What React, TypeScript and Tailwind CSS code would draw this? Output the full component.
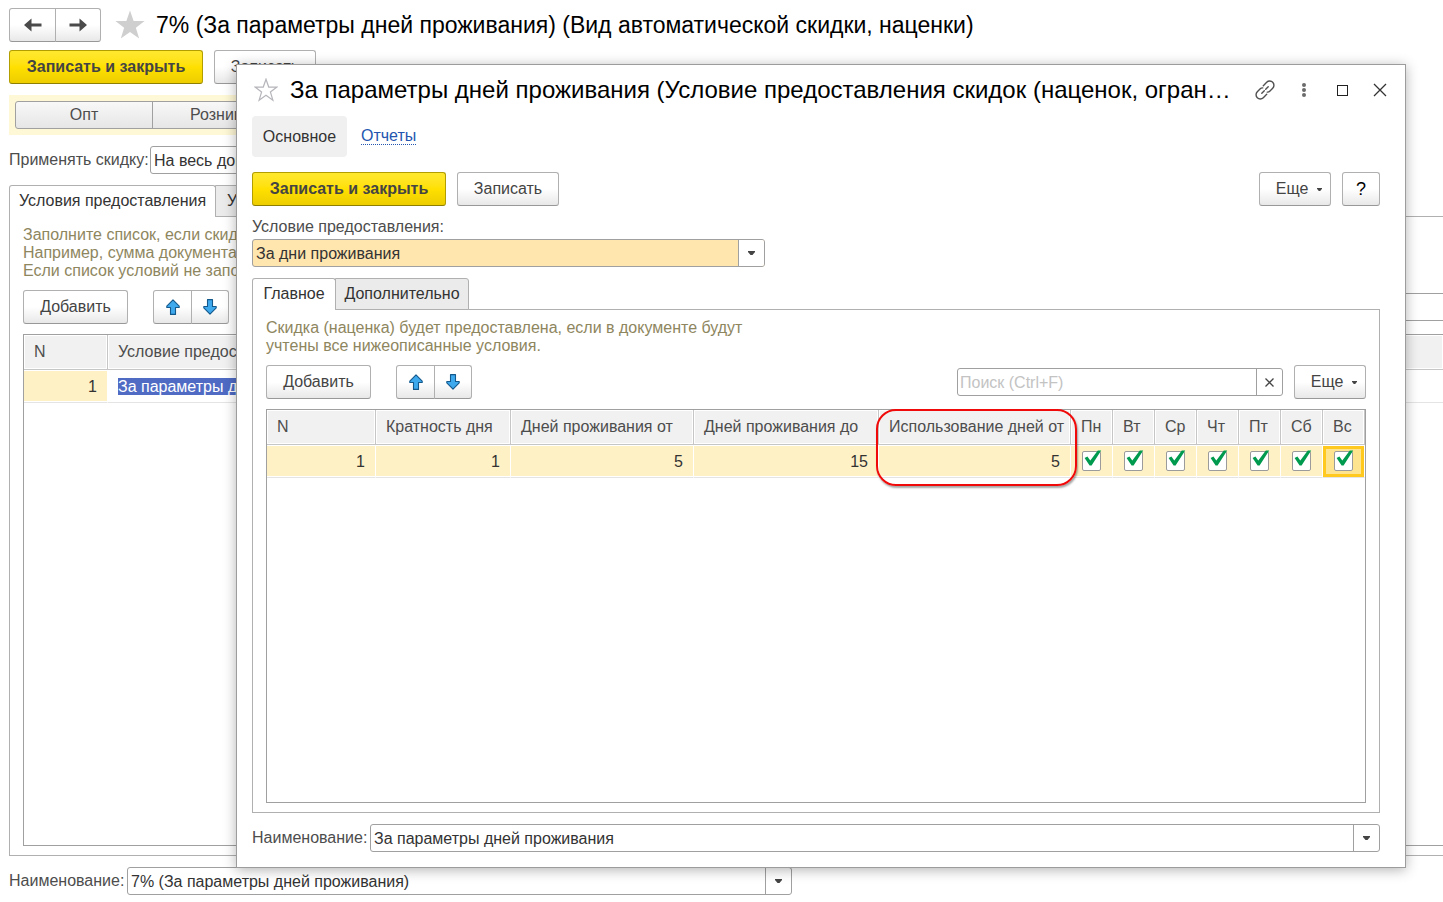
import React from 'react';
import { clsx } from 'clsx';

const plainBtn =
    'flex h-[34px] items-center justify-center whitespace-nowrap rounded-[3px] border border-[#b0b0b0] border-b-[#989898] bg-linear-to-b from-white from-50% to-[#e8e8e8] text-[#444]';
const yellowBtn =
    'h-[34px] w-[194px] rounded-[3px] border border-[#b39e00] border-b-[#8f7f00] bg-linear-to-b from-[#ffe82e] via-[#ffe000] to-[#edcd00] font-bold text-[#444]';
const fieldBox = 'flex h-7 rounded-[3px] border border-[#a0a0a0] bg-white text-[#333]';
const headCell = 'h-[35px] border-b border-r border-[#c6c6c6] bg-[#f1f1f1] pl-[10px] text-left font-normal text-[#4d4d4d] shadow-[inset_0_0_0_1px_#fff] whitespace-nowrap';
const bodyCell = 'h-[33px] border-b border-b-[#e4e4e4] border-r border-r-white bg-[#fef1c6] text-right text-[#333] shadow-[inset_0_-1px_0_#fff,inset_0_1px_0_#fff]';

const days = ['Пн', 'Вт', 'Ср', 'Чт', 'Пт', 'Сб', 'Вс'];

const Caret = ({ small }: { small?: boolean }) => (
    <svg width={small ? 5 : 7} height={small ? 3 : 4} viewBox="0 0 7 4" aria-hidden="true">
        <path d="M0 0h7v1L4.5 4h-2L0 1z" fill="#444" />
    </svg>
);

const BlueArrow = ({ down }: { down?: boolean }) => (
    <svg width="14" height="16" viewBox="0 0 14 16" className={clsx(down && 'rotate-180')} aria-hidden="true">
        <path d="M7 .8 13.2 7.2V8.5H9.5V15.4H4.5V8.5H.8V7.2z" fill="#3fa9ee" stroke="#14598c" strokeWidth="1.1" strokeLinejoin="round" />
    </svg>
);

const BackArrow = ({ forward }: { forward?: boolean }) => (
    <svg width="18" height="14" viewBox="0 0 18 14" className={clsx(forward && 'rotate-180')} aria-hidden="true">
        <path d="M0 7 7.5.5V5.4H17.5V8.6H7.5V13.5z" fill="#4a4a4a" />
    </svg>
);

const Star = ({ size, filled }: { size: number; filled?: boolean }) => (
    <svg width={size} height={size} viewBox="0 0 30 30" aria-hidden="true">
        <path
            d="M15 1.5 18.4 11.3H28.7L20.5 17.5 23.6 27.7 15 21.6 6.4 27.7 9.5 17.5 1.3 11.3H11.6z"
            fill={filled ? '#cfcfcf' : 'none'}
            stroke={filled ? 'none' : '#b5b5bb'}
            strokeWidth="1.5"
        />
    </svg>
);

const MoveButtons = () => (
    <div className="flex">
        <button type="button" aria-label="Вверх" className={clsx(plainBtn, 'w-[39px] rounded-r-none')}><BlueArrow /></button>
        <button type="button" aria-label="Вниз" className={clsx(plainBtn, '-ml-px w-[38px] rounded-l-none')}><BlueArrow down /></button>
    </div>
);

const MoreButton = () => (
    <button type="button" className={clsx(plainBtn, 'w-[72px] gap-[9px] pl-2')}>Еще <Caret small /></button>
);

const ComboField = ({ id, value }: { id: string; value: string }) => (
    <div className={clsx(fieldBox, 'w-full')}>
        <input id={id} type="text" defaultValue={value} className="min-w-0 flex-1 bg-transparent pl-[3px] pt-px outline-none" />
        <button type="button" aria-label="Выбрать" className="flex w-[26px] items-center justify-center border-l border-[#a0a0a0]"><Caret /></button>
    </div>
);

const DayCheck = ({ day, active }: { day: string; active?: boolean }) => (
    <label className={clsx('flex h-[31px] items-center justify-center', active && 'border-3 border-[#ffc91f] bg-[#ffe48f]')}>
        <span className="relative block h-5 w-[19px]">
            <input type="checkbox" defaultChecked aria-label={day} className="peer block h-5 w-[19px] appearance-none rounded-[2px] border border-[#9b9b9b] bg-white" />
            <svg width="22" height="20" viewBox="0 0 22 20" className="pointer-events-none absolute -top-0.5 left-0 hidden peer-checked:block" aria-hidden="true">
                <path d="M2.6 9 5.4 7.6 8.3 11.6 15.8 1.4H19.2L9.6 16.4H7.6z" fill="#009a4e" />
            </svg>
        </span>
    </label>
);

const MainForm = () => (
    <main className="flex h-screen min-h-[700px] flex-col overflow-hidden pb-[7px] pl-[9px] pt-[9px]">
        <div className="flex h-[31px] items-center">
            <div className="flex">
                <button type="button" aria-label="Назад" className={clsx(plainBtn, 'h-[31px] w-[47px] rounded-r-none')}><BackArrow /></button>
                <button type="button" aria-label="Вперед" className={clsx(plainBtn, '-ml-px h-[31px] w-[46px] rounded-l-none')}><BackArrow forward /></button>
            </div>
            <button type="button" aria-label="В избранное" className="ml-[13px]"><Star size={32} filled /></button>
            <h1 className="ml-[10px] whitespace-nowrap text-[23px] leading-[30px] text-black">
                7% (За параметры дней проживания) (Вид автоматической скидки, наценки)
            </h1>
        </div>

        <div className="mt-[10px] flex gap-[11px]">
            <button type="button" className={yellowBtn}>Записать и закрыть</button>
            <button type="button" className={clsx(plainBtn, 'w-[102px]')}>Записать</button>
        </div>

        <div className="mt-[11px] flex h-10 max-w-[900px] items-center bg-[#fff8d6] pl-[6px] text-[#4d4d4d]">
            <button type="button" className="h-7 w-[138px] rounded-l-[3px] border border-[#a0a0a0] bg-linear-to-b from-[#f8f8f8] to-[#e6e6e6]">Опт</button>
            <button type="button" className="-ml-px h-7 w-[138px] border border-[#a0a0a0] bg-linear-to-b from-[#f8f8f8] to-[#e6e6e6]">Розница</button>
        </div>

        <div className="mt-[11px] flex items-center">
            <label htmlFor="apply" className="w-[141px] shrink-0 whitespace-nowrap text-[#4d4d4d]">Применять скидку:</label>
            <div className="w-[300px]"><ComboField id="apply" value="На весь документ" /></div>
        </div>

        <div role="tablist" className="relative z-10 mt-[11px] flex h-8 shrink-0">
            <button type="button" role="tab" aria-selected="true" className="w-[207px] rounded-t-[3px] border border-b-0 border-[#b0b0b0] bg-white pb-px text-[#333]">Условия предоставления</button>
            <button type="button" role="tab" aria-selected="false" className="-ml-px w-[140px] rounded-tr-[3px] border border-[#b0b0b0] bg-[#ebebeb] pl-[11px] text-left text-[#333]">Условия</button>
        </div>

        <section className="-mt-px flex min-h-0 flex-1 flex-col border border-r-0 border-[#b0b0b0] pb-[9px] pl-[13px] pt-[9px]">
            <p className="leading-[18px] text-[#8e865e]">
                Заполните список, если скидка<br />
                Например, сумма документа<br />
                Если список условий не заполнен
            </p>
            <div className="mt-[10px] flex items-center">
                <button type="button" className={clsx(plainBtn, 'w-[105px]')}>Добавить</button>
                <div className="ml-[25px]"><MoveButtons /></div>
                <input type="search" aria-label="Поиск" className="ml-auto h-7 w-[300px] border border-r-0 border-[#a0a0a0]" />
            </div>
            <div className="mt-[10px] flex-1 border border-r-0 border-[#a0a0a0]">
                <table className="w-full table-fixed border-separate border-spacing-0">
                    <thead>
                        <tr>
                            <th className={clsx(headCell, 'w-[84px]')}>N</th>
                            <th className={clsx(headCell, 'w-[136px] overflow-hidden')}>Условие предост.</th>
                            <th className={clsx(headCell, 'border-r-0')} />
                        </tr>
                    </thead>
                    <tbody>
                        <tr>
                            <td className={clsx(bodyCell, 'pr-[10px] pt-px')}>1</td>
                            <td className="overflow-hidden whitespace-nowrap border-b border-[#e4e4e4] pl-[10px] pt-px"><span className="bg-[#4f6bc4] text-white">За параметры дней</span></td>
                            <td className="border-b border-[#e4e4e4]" />
                        </tr>
                    </tbody>
                </table>
            </div>
        </section>

        <div className="mt-[11px] flex items-center">
            <label htmlFor="main-name" className="w-[118px] shrink-0 text-[#4d4d4d]">Наименование:</label>
            <div className="w-[665px]"><ComboField id="main-name" value="7% (За параметры дней проживания)" /></div>
        </div>
    </main>
);

const ConditionsTable = () => (
    <table className="w-full table-fixed border-separate border-spacing-0">
        <thead>
            <tr>
                <th className={headCell}>N</th>
                <th className={clsx(headCell, 'w-[135px]')}>Кратность дня</th>
                <th className={clsx(headCell, 'w-[183px]')}>Дней проживания от</th>
                <th className={clsx(headCell, 'w-[185px]')}>Дней проживания до</th>
                <th className={clsx(headCell, 'relative w-[192px]')}>
                    Использование дней от
                    <span className="pointer-events-none absolute -left-[3px] -top-px z-10 h-[77px] w-[201px] rounded-[20px] border-2 border-[#f00a0a] shadow-[1px_2px_2px_rgba(0,0,0,0.35)]" />
                </th>
                {days.map((day) => <th key={day} className={clsx(headCell, 'w-[42px]')}>{day}</th>)}
            </tr>
        </thead>
        <tbody>
            <tr>
                {[1, 1, 5, 15, 5].map((value, i) => <td key={i} className={clsx(bodyCell, 'pr-[10px] pt-px')}>{value}</td>)}
                {days.map((day) => <td key={day} className={bodyCell}><DayCheck day={day} active={day === 'Вс'} /></td>)}
            </tr>
        </tbody>
    </table>
);

const ConditionDialog = () => (
    <div role="dialog" aria-labelledby="dialog-title" className="absolute bottom-[34px] left-[236px] right-[37px] top-16 z-20 flex flex-col border border-[#9c9c9c] bg-white pb-[15px] pl-[15px] pr-[25px] pt-[9px] shadow-[0_2px_12px_rgba(0,0,0,0.3)]">
        <div className="-mr-2 flex h-8 items-center pr-px">
            <button type="button" aria-label="В избранное" className="ml-[2px]"><Star size={24} /></button>
            <h2 id="dialog-title" className="ml-3 min-w-0 flex-1 truncate text-[24px] leading-8 text-black">
                За параметры дней проживания (Условие предоставления скидок (наценок, огран…
            </h2>
            <button type="button" aria-label="Ссылка" className="ml-2 shrink-0">
                <svg width="22" height="22" viewBox="0 0 22 22" fill="none" stroke="#505050" strokeWidth="1.4" strokeLinecap="round" aria-hidden="true">
                    <path d="M9.300 6.700 12.700 3.300A4.100 4.100 0 0 1 18.700 9.300L16 12Q14.800 13.200 13.300 13.100M12.700 15.300 9.300 18.700A4.100 4.100 0 0 1 3.300 12.700L6 10Q7.200 8.800 8.700 8.900M7.800 14.200 10.300 11.700M11.700 10.300 14.200 7.800" />
                </svg>
            </button>
            <button type="button" aria-label="Меню" className="ml-[25px] shrink-0">
                <svg width="6" height="16" viewBox="0 0 6 16" fill="#6b6b6b" aria-hidden="true">
                    <circle cx="3" cy="3" r="2" /><circle cx="3" cy="8" r="2" /><circle cx="3" cy="13" r="2" />
                </svg>
            </button>
            <button type="button" aria-label="Развернуть" className="ml-[30px] h-[11px] w-[11px] shrink-0 border border-[#222]" />
            <button type="button" aria-label="Закрыть" className="ml-[25px] shrink-0">
                <svg width="14" height="14" viewBox="0 0 14 14" stroke="#333" strokeWidth="1.3" aria-hidden="true"><path d="M1 1 13 13M13 1 1 13" /></svg>
            </button>
        </div>

        <nav className="mt-[10px] flex h-[41px] items-center gap-[14px]">
            <a href="#main" className="flex h-full w-[95px] items-center justify-center rounded-[4px] bg-[#f0f0f0] text-[#333]">Основное</a>
            <a href="#reports" className="border-b border-dotted border-[#2456b0] leading-4 text-[#2456b0]">Отчеты</a>
        </nav>

        <div className="mt-[15px] flex">
            <button type="button" className={yellowBtn}>Записать и закрыть</button>
            <button type="button" className={clsx(plainBtn, 'ml-[11px] w-[102px]')}>Записать</button>
            <div className="ml-auto flex gap-[11px]">
                <MoreButton />
                <button type="button" aria-label="Справка" className={clsx(plainBtn, 'w-[38px] text-[18px] text-black')}>?</button>
            </div>
        </div>

        <label htmlFor="condition" className="mt-[11px] leading-5 text-[#4d4d4d]">Условие предоставления:</label>
        <div className="relative mt-[2px] h-7 w-[513px]">
            <select id="condition" className="h-7 w-full appearance-none rounded-[3px] border border-[#a0a0a0] bg-[#ffe5ae] pl-[3px] pt-px text-[#333]">
                <option>За дни проживания</option>
            </select>
            <span className="pointer-events-none absolute inset-y-px right-px flex w-[26px] items-center justify-center rounded-r-[2px] border-l border-[#a0a0a0] bg-white"><Caret /></span>
        </div>

        <div role="tablist" className="relative z-10 mt-[11px] flex h-8 shrink-0">
            <button type="button" role="tab" aria-selected="true" className="w-[84px] rounded-t-[3px] border border-b-0 border-[#b0b0b0] bg-white pb-px text-[#333]">Главное</button>
            <button type="button" role="tab" aria-selected="false" className="-ml-px w-[134px] rounded-tr-[3px] border border-[#b0b0b0] bg-[#ebebeb] text-[#333]">Дополнительно</button>
        </div>

        <section className="-mt-px flex min-h-0 flex-1 flex-col border border-[#b0b0b0] px-[13px] pb-[9px] pt-[9px]">
            <p className="leading-[18px] text-[#8e865e]">
                Скидка (наценка) будет предоставлена, если в документе будут<br />
                учтены все нижеописанные условия.
            </p>
            <div className="mt-[10px] flex items-center">
                <button type="button" className={clsx(plainBtn, 'w-[105px]')}>Добавить</button>
                <div className="ml-[25px]"><MoveButtons /></div>
                <div className={clsx(fieldBox, 'ml-auto mr-[11px] w-[326px]')}>
                    <input type="text" aria-label="Поиск" placeholder="Поиск (Ctrl+F)" className="min-w-0 flex-1 bg-transparent pl-[2px] pt-px outline-none placeholder:text-[#c3c3c3]" />
                    <button type="button" aria-label="Очистить" className="flex w-[26px] items-center justify-center border-l border-[#a0a0a0]">
                        <svg width="9" height="9" viewBox="0 0 9 9" stroke="#444" strokeWidth="1.3" aria-hidden="true"><path d="M.5.5 8.500 8.500M8.500.5.5 8.500" /></svg>
                    </button>
                </div>
                <MoreButton />
            </div>
            <div className="mt-[10px] flex-1 border border-[#a0a0a0]"><ConditionsTable /></div>
        </section>

        <div className="mt-[11px] flex items-center">
            <label htmlFor="dialog-name" className="w-[118px] shrink-0 text-[#4d4d4d]">Наименование:</label>
            <ComboField id="dialog-name" value="За параметры дней проживания" />
        </div>
    </div>
);

export default function App() {
    return (
        <div className="relative overflow-hidden bg-white font-['Liberation_Sans',Arial,sans-serif] text-[16px] leading-5">
            <MainForm />
            <ConditionDialog />
        </div>
    );
}
